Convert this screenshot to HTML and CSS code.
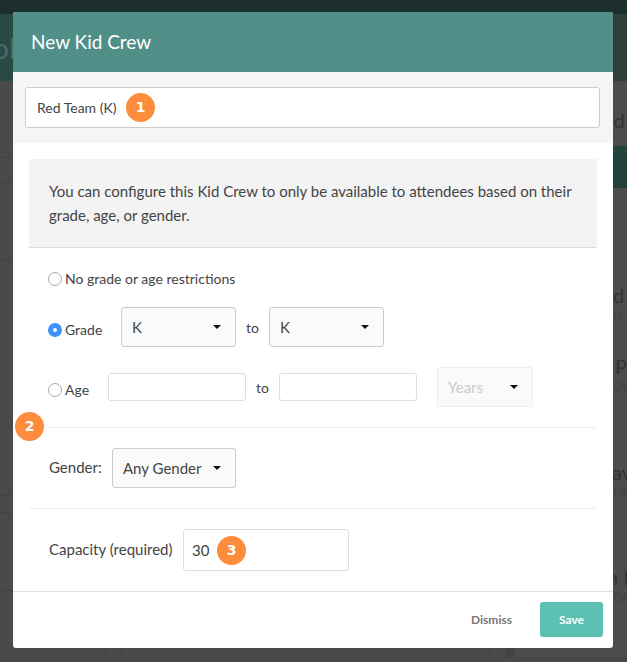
FILE: index.html
```html
<!DOCTYPE html>
<html lang="en">
<head>
<meta charset="utf-8">
<title>New Kid Crew</title>
<link rel="stylesheet" href="styles.css">
</head>
<body>
<div class="backdrop">
  <div class="topbar"></div>
  <div class="panes">
    <div class="pane-left">
      <div class="pane-head-left"><span class="head-text">ol</span></div>
      <div class="lines"><i class="l1"></i><i class="l2"></i><i class="l3"></i><i class="l4"></i><i class="l5"></i><i class="l6"></i></div>
    </div>
    <div class="pane-gutter"></div>
    <div class="pane-mid"></div>
    <div class="pane-gutter-b"></div>
    <div class="pane-dark"></div>
    <div class="pane-right">
      <div class="pane-head-right"></div>
      <div class="assigned">ed</div>
      <div class="band"></div>
      <div class="person p1"><b>d I</b><small>le</small></div>
      <div class="person p2"><b>Pi</b><small>Old</small></div>
      <div class="person p3"><b>Dav</b><small>Old</small></div>
      <div class="person p4"><b>n H</b><small>Old</small></div>
    </div>
  </div>
  <div class="bottom-strip"></div>
</div>

<div class="modal">
  <header class="modal-head">New Kid Crew</header>
  <section class="name-section">
    <div class="name-field">
      <input class="name-input" type="text" value="Red Team (K)" aria-label="Name">
      <span class="badge badge-1">1</span>
    </div>
  </section>
  <section class="form">
    <p class="info">You can configure this Kid Crew to only be available to attendees based on their grade, age, or gender.</p>

    <div class="row row-none">
      <span class="radio"></span><span class="radio-text">No grade or age restrictions</span>
    </div>
    <div class="row row-grade">
      <div class="radio-label w-grade"><span class="radio checked"></span><span class="radio-text">Grade</span></div>
      <div class="select w-k"><span>K</span><i class="caret"></i></div>
      <span class="to">to</span>
      <div class="select w-k"><span>K</span><i class="caret"></i></div>
    </div>
    <div class="row row-age">
      <div class="radio-label w-age"><span class="radio"></span><span class="radio-text">Age</span></div>
      <input class="age-input" type="text" aria-label="Age from">
      <span class="to">to</span>
      <input class="age-input" type="text" aria-label="Age to">
      <div class="select disabled w-years"><span>Years</span><i class="caret"></i></div>
    </div>
    <hr class="rule">
    <div class="row row-gender">
      <span class="field-label w-gender">Gender:</span>
      <div class="select w-any"><span>Any Gender</span><i class="caret"></i></div>
    </div>
    <hr class="rule">
    <div class="row row-capacity">
      <span class="field-label w-capacity">Capacity (required)</span>
      <div class="capacity-field">
        <input class="capacity-input" type="text" value="30" aria-label="Capacity">
        <span class="badge badge-3">3</span>
      </div>
    </div>
    <span class="badge badge-2">2</span>
  </section>
  <footer class="modal-foot">
    <button class="btn-dismiss" type="button">Dismiss</button>
    <button class="btn-save" type="button">Save</button>
  </footer>
</div>
</body>
</html>
```
FILE: styles.css
```css
* { box-sizing: border-box; }
html, body { margin: 0; height: 662px; overflow: hidden; }
body { font-family: Lato, "Open Sans", sans-serif; color: #444; background: #4a4a49; }

/* dimmed page behind the dialog */
.backdrop { height: 662px; display: flex; flex-direction: column; }
.topbar { height: 14px; background: #1c2f2d; flex: none; }
.panes { flex: 1; display: flex; min-height: 0; }
.bottom-strip { flex: none; height: 4px; border-top: 1px solid #424342; }
.pane-left { width: 106px; border-right: 1px solid #424342; }
.pane-head-left { height: 67px; background: linear-gradient(90deg, #2a4a45, #27433f); color: #4d6a66; font-size: 28px; line-height: 68px; overflow: hidden; white-space: nowrap; }
.head-text { display: inline-block; margin-left: -7px; }
.lines i { display: block; height: 1px; background: #424342; }
.l1 { margin-top: 76px; }
.l2 { margin-top: 24px; }
.l3 { margin-top: 77px; }
.l4 { margin-top: 234px; }
.l5 { margin-top: 16px; }
.l6 { margin-top: 77px; }
.pane-gutter { width: 16px; border-right: 1px solid #424342; }
.pane-mid { flex: 1; }
.pane-gutter-b { width: 16px; border-left: 1px solid #424342; }
.pane-dark { width: 9px; background: #424342; }
.pane-right { width: 113px; background: #4c4c4b; overflow: hidden; white-space: nowrap; }
.pane-head-right { height: 67px; background: #2f3f3d; }
.assigned { height: 65px; padding: 27px 0 0 89px; font-size: 20px; line-height: 24px; color: #333; }
.band { height: 42px; background: #23423e; }
.person { padding-left: 99px; color: #333; }
.person b { display: block; font-weight: 400; font-size: 20px; line-height: 24px; }
.person small { display: block; font-size: 13px; line-height: 16px; color: #444; }
.p1 { margin-top: 95px; }
.p2 { margin-top: 31px; }
.p2 b { margin-left: 2px; }
.p3 { margin-top: 66px; }
.p3 b { margin-left: -16px; }
.p4 { margin-top: 65px; }
.p4 b { margin-left: -6px; }

/* dialog */
.modal { position: absolute; left: 13px; top: 12px; width: 600px; height: 636px; background: #fff; border-radius: 3px; overflow: hidden; }
.modal-head { height: 60px; padding-left: 18px; background: #4f8f87; color: #fff; font-size: 19px; line-height: 59px; }
.name-section { height: 71px; padding: 15px 13px 15px 12px; background: #f4f6f6; }
.name-field { position: relative; height: 41px; }
.name-input { width: 100%; height: 41px; padding: 0 11px; border: 1px solid #ccc; border-radius: 3px; background: #fff; font: 14px Lato, sans-serif; color: #444; }
.badge { position: absolute; width: 29px; height: 29px; border-radius: 50%; background: #fd8c3c; color: #fff; font: 700 14px/29px "DejaVu Sans", sans-serif; text-align: center; }
.badge-1 { left: 101px; top: 6px; }
.form { position: relative; height: 448px; padding: 16px 16px 0; }
.badge-2 { left: 2px; top: 269px; }
.badge-3 { left: 34px; top: 7px; }
.info { height: 89px; margin: 0; padding: 20px 20px 0; background: #f3f3f3; border-bottom: 1px solid #ddd; font-size: 15px; line-height: 24px; color: #444; }

.row { display: flex; align-items: center; font-size: 15px; }
.row-none { height: 20px; margin-top: 21px; padding-left: 19px; }
.row-grade { height: 40px; margin-top: 18px; padding-left: 19px; }
.row-age { height: 40px; margin-top: 20px; padding-left: 19px; }
.row-gender { height: 40px; margin-top: 20px; padding-left: 20px; }
.row-capacity { height: 42px; margin-top: 20px; padding-left: 20px; }
.radio-label { display: flex; align-items: center; height: 100%; padding-top: 6px; }
.w-grade { width: 73px; }
.w-age { width: 60px; }
.w-gender { width: 63px; }
.w-capacity { width: 134px; }
.w-k { width: 115px; }
.w-years { width: 96px; margin-left: 20px; }
.w-any { width: 124px; }
.radio { flex: none; width: 14px; height: 14px; margin-right: 3px; border: 1px solid #aaa; border-radius: 50%; background: #fff; }
.radio.checked { border: 5px solid #3b93fb; }
.radio-text { font-size: 14px; line-height: 20px; }
.select { display: flex; align-items: center; justify-content: space-between; height: 40px; padding: 0 14px 0 10px; border: 1px solid #ccc; border-radius: 3px; background: #fafafa; color: #444; }
.select.disabled { border-color: #eee; color: #ccc; }
.caret { flex: none; width: 0; height: 0; margin-bottom: 1px; border: 4px solid transparent; border-top: 4px solid #111; border-bottom: 0; }
.to { width: 33px; padding-top: 1px; font-size: 14px; text-align: center; }
.age-input { width: 138px; height: 28px; padding: 0 8px; border: 1px solid #ddd; border-radius: 3px; background: #fff; }
.field-label { margin-bottom: 2px; line-height: 20px; }
.capacity-field { position: relative; width: 166px; height: 42px; }
.capacity-input { width: 100%; height: 42px; padding: 0 8px; border: 1px solid #ddd; border-radius: 3px; background: #fff; font: 15px Lato, sans-serif; color: #444; }
.rule { height: 1px; margin: 20px 0 0; border: 0; background: #eee; }

.modal-foot { display: flex; justify-content: flex-end; align-items: flex-start; height: 57px; padding: 10px 10px 0 0; border-top: 1px solid #ddd; }
.btn-dismiss { height: 35px; margin-right: 28px; padding: 0; border: 0; background: none; font: 700 12px Lato, sans-serif; color: #777; }
.btn-save { width: 63px; height: 35px; padding: 0; border: 0; border-radius: 3px; background: #5cc1b3; color: #fff; font: 700 12px Lato, sans-serif; }
```
